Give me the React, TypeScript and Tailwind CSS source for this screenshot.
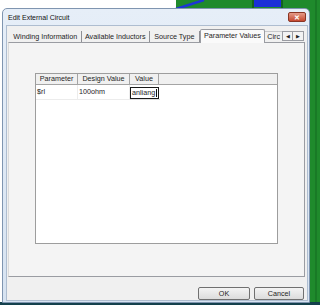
import React from 'react';

const tabs = [
  { label: 'Winding Information', w: 'w-[72px]' },
  { label: 'Available Inductors', w: 'w-[69px]' },
  { label: 'Source Type', w: 'w-[50px]' },
];

const Desktop: React.FC = () => (
  <svg className="absolute inset-0" width={320} height={305} viewBox="0 0 320 305">
    <rect x={176} y={0} width={144} height={305} fill="#1f8a2c" />
    <path d="M176 9 L204 0" stroke="#1d36d6" strokeWidth={2.5} />
    <rect x={254} y={0} width={27} height={7} fill="#1b2fd8" />
    <line x1={253} y1={0} x2={253} y2={8} stroke="#0c3a12" strokeWidth={1} />
    <line x1={282} y1={0} x2={282} y2={8} stroke="#0c3a12" strokeWidth={1} />
    <line x1={316} y1={0} x2={316} y2={305} stroke="#156b20" strokeWidth={1} />
    <rect x={0} y={302} width={320} height={3} fill="#14404c" />
  </svg>
);

const Tabs: React.FC = () => (
  <div className="ml-[3px] mr-[3px] flex h-[16px] items-end">
    {tabs.map((t) => (
      <div
        key={t.label}
        className={`${t.w} flex h-[11px] items-center justify-center border-r border-[#8e8f94] text-[7.2px] leading-none`}
      >
        {t.label}
      </div>
    ))}
    <div className="relative z-10 -mb-px flex h-[14px] w-[66px] items-center justify-center rounded-t-[2px] border border-b-0 border-[#9a9ca2] bg-[#fafafa] pb-[2px] text-[7.2px] leading-none">
      Parameter Values
    </div>
    <div className="flex h-[11px] w-[17px] items-center border-t border-[#c8c9cc] pl-[2px] text-[7.2px] leading-none whitespace-nowrap">
      Circ
    </div>
    <div className="mb-[1px] flex h-[10px] w-[11px] items-center justify-center border border-[#9a9ca2] bg-[#f3f3f3] text-[5px] leading-none">
      ◀
    </div>
    <div className="mb-[1px] flex h-[10px] w-[11px] items-center justify-center border border-l-0 border-[#9a9ca2] bg-[#f3f3f3] text-[5px] leading-none">
      ▶
    </div>
  </div>
);

const Grid: React.FC = () => (
  <div className="mx-[26px] mt-[30px] mb-[32px] flex flex-1 flex-col border border-[#9d9d9d] bg-white">
    <div className="flex h-[11px] border-b border-[#a4a4a4] bg-[#f0f0f0] text-[7.2px] leading-none">
      <div className="flex w-[42px] items-center justify-center border-r border-[#a4a4a4]">Parameter</div>
      <div className="flex w-[52px] items-center justify-center border-r border-[#a4a4a4]">Design Value</div>
      <div className="flex w-[29px] items-center justify-center border-r border-[#a4a4a4]">Value</div>
      <div className="flex-1" />
    </div>
    <div className="flex h-[15px] text-[7.2px] leading-none">
      <div className="flex w-[42px] items-center border-b border-r border-[#ececec] pl-[1px]">$rl</div>
      <div className="flex w-[52px] items-center border-b border-r border-[#ececec] pl-[1px]">100ohm</div>
      <div className="flex w-[30px] items-end border-b border-[#dcdcdc]">
        <div className="flex h-[12px] w-[29px] items-center border border-[#1a1a1a] pl-[1px]">
          anliang<span className="ml-px h-[8px] w-px bg-[#111]" />
        </div>
      </div>
    </div>
  </div>
);

export default function App() {
  return (
    <div className="relative h-[305px] w-[320px] overflow-hidden bg-white font-['Liberation_Sans',Arial,sans-serif] text-[#1e1e1e]">
      <Desktop />
      <div className="absolute left-[2px] top-[8px] flex h-[295px] w-[308px] flex-col rounded-t-[5px] border border-[#7f95b0] bg-gradient-to-b from-[#e6eef8] to-[#d7e3f1]">
        <div className="relative flex h-[17px] items-center pl-[5px] text-[7px] leading-none text-[#111]">
          Edit External Circuit
          <div className="absolute right-[3px] top-[3px] flex h-[10px] w-[18px] items-center justify-center rounded-[2px] border border-[#8a3524] bg-gradient-to-b from-[#e49a88] to-[#c5472e] text-[7px] font-bold text-white">
            ✕
          </div>
        </div>
        <div className="mb-[1px] ml-[3px] mr-px flex flex-1 flex-col border border-[#aebdd0] bg-[#f0f0f0]">
          <Tabs />
          <div className="ml-px mr-[2px] flex h-[235px] flex-col border border-[#9a9ca2] border-l-[#dadada] bg-[#f4f4f4]">
            <Grid />
          </div>
          <div className="mt-[10px] flex justify-end gap-[4px] pr-[3px]">
            <div className="flex h-[13px] w-[52px] items-center justify-center rounded-[2px] border border-[#707070] bg-gradient-to-b from-[#f4f4f4] to-[#dcdcdc] text-[7.2px] leading-none">
              OK
            </div>
            <div className="flex h-[13px] w-[50px] items-center justify-center rounded-[2px] border border-[#707070] bg-gradient-to-b from-[#f4f4f4] to-[#dcdcdc] text-[7.2px] leading-none">
              Cancel
            </div>
          </div>
        </div>
      </div>
    </div>
  );
}
